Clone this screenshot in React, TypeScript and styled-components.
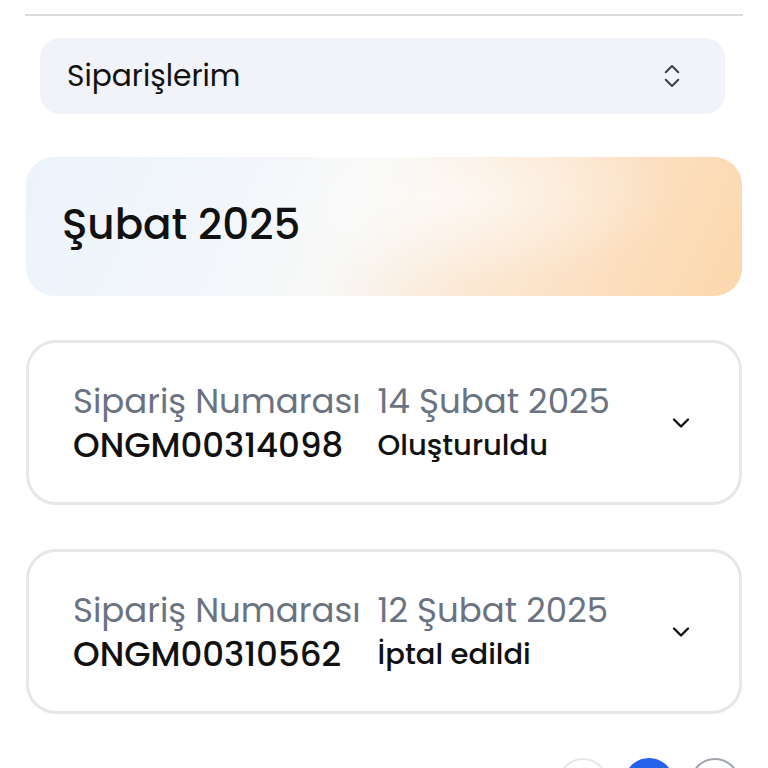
import React from "react";
import styled, { createGlobalStyle } from "styled-components";
import { ChevronDown, ChevronsUpDown } from "lucide-react";

const GlobalStyle = createGlobalStyle`
  html, body {
    margin: 0;
    padding: 0;
    background: #ffffff;
    font-family: "Poppins", "Inter", "Open Sans", sans-serif;
    overflow: hidden;
  }
`;

const orders = [
  { no: "ONGM00314098", date: "14 Şubat 2025", status: "Oluşturuldu" },
  { no: "ONGM00310562", date: "12 Şubat 2025", status: "İptal edildi" },
];

const App = () => {
  return (
    <>
      <GlobalStyle />
      <Page>
        <Divider />
        <Select>
          <SelectText>Siparişlerim</SelectText>
          <ChevronsUpDown size={30} strokeWidth={1.6} color="#3f3f46" />
        </Select>
        <MonthBanner>
          <MonthTitle>Şubat 2025</MonthTitle>
        </MonthBanner>
        {orders.map((o) => (
          <OrderCard key={o.no}>
            <OrderCol>
              <Label>Sipariş Numarası</Label>
              <OrderNo>{o.no}</OrderNo>
            </OrderCol>
            <OrderCol>
              <Label>{o.date}</Label>
              <Status>{o.status}</Status>
            </OrderCol>
            <Toggle>
              <ChevronDown size={28} strokeWidth={2} color="#111" />
            </Toggle>
          </OrderCard>
        ))}
        <Pager>
          <PageDot />
          <PageDot active />
          <PageDot dark />
        </Pager>
      </Page>
    </>
  );
};

export default App;

const Page = styled.div`
  width: 768px;
  box-sizing: border-box;
  padding: 14px 26px 0 26px;
  display: flex;
  flex-direction: column;
  & > * {
    flex-shrink: 0;
  }
`;

const Divider = styled.div`
  height: 2px;
  background: #d9dadd;
  margin: 0 -1px;
`;

const Select = styled.div`
  margin: 22px 17px 0 14px;
  height: 76px;
  background: #f1f3f8;
  border-radius: 20px;
  display: flex;
  align-items: center;
  justify-content: space-between;
  padding: 0 38px 0 27px;
`;

const SelectText = styled.div`
  font-size: 29.7px;
  color: #111;
`;

const MonthBanner = styled.div`
  margin-top: 43px;
  height: 139px;
  border-radius: 28px;
  display: flex;
  align-items: center;
  padding: 0 36px;
  background:
    radial-gradient(ellipse 30% 60% at 60% 30%, rgba(255, 255, 255, 0.6), rgba(255, 255, 255, 0) 100%),
    linear-gradient(115deg, #edf3fc 0%, #f3f7fb 32%, #f8f8f6 46%, #fbead8 62%, #fcdfbf 82%, #fcd7ab 100%);
`;

const MonthTitle = styled.div`
  font-size: 42px;
  font-weight: 500;
  color: #111;
  margin-top: -4px;
`;

const OrderCard = styled.div`
  margin-top: 44px;
  height: 165px;
  box-sizing: border-box;
  border: 3px solid #e5e7eb;
  border-radius: 30px;
  display: flex;
  align-items: center;
  padding: 0 44px;
  gap: 17px;
`;

const OrderCol = styled.div`
  display: flex;
  flex-direction: column;
  gap: 2px;
`;

const Label = styled.div`
  font-size: 34px;
  color: #6b7280;
  line-height: 42px;
  white-space: nowrap;
`;

const OrderNo = styled.div`
  font-size: 34px;
  font-weight: 500;
  color: #111;
  line-height: 42px;
`;

const Status = styled.div`
  font-size: 29px;
  font-weight: 500;
  color: #111;
  line-height: 42px;
`;

const Toggle = styled.div`
  margin-left: auto;
  margin-right: 0;
  display: flex;
  align-items: center;
`;

const Pager = styled.div`
  margin-top: 44px;
  display: flex;
  justify-content: flex-end;
  gap: 16px;
  padding-right: 2px;
`;

const PageDot = styled.div<{ active?: boolean; dark?: boolean }>`
  width: 50px;
  height: 50px;
  border-radius: 50%;
  box-sizing: border-box;
  background: ${(p) => (p.active ? "#2563eb" : "#fff")};
  border: 2px solid ${(p) => (p.active ? "#2563eb" : p.dark ? "#9ca3af" : "#e5e7eb")};
`;
